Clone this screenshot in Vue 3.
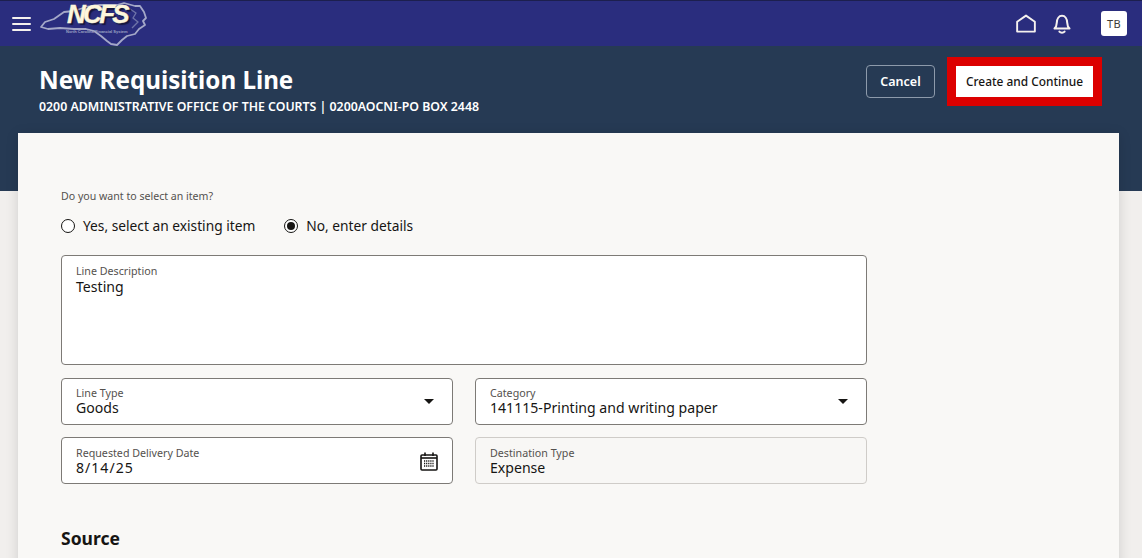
<script setup>
const radios = [
  { label: 'Yes, select an existing item', on: false },
  { label: 'No, enter details', on: true }
]
</script>

<template>
  <div class="page">
    <header class="nav">
      <div class="nav-left">
        <button class="burger" aria-label="Menu"><span></span><span></span><span></span></button>
        <div class="logo">
          <svg class="state" width="108" height="46" viewBox="0 0 108 46" fill="none">
            <path d="M1 26 L5 21 L14 18 L24 11 L34 10 L46 6 L60 4 L77 4 L84 2 L95 5 L100 5 L104 11 L106 17 L103 20 L105 24 L99 28 L95 33 L87 35 L82 39 L77 44 L71 43 L67 40 L61 35 L54 30 L46 28 L34 28 L20 27 L8 28 Z" stroke="#a4a8c8" stroke-width="1.8" stroke-linejoin="round"/>
            <path d="M90 8 L96 12 L93 17 L98 21 L92 27" stroke="#6f74a8" stroke-width="1.4" stroke-linejoin="round"/>
          </svg>
          <span class="logo-text">NCFS</span>
          <span class="logo-sub">North Carolina Financial System</span>
        </div>
      </div>
      <div class="nav-right">
        <svg class="home" width="20" height="19" viewBox="0 0 21 19" fill="none">
          <path d="M1.2 18 V7.6 L10.5 1.2 L19.8 7.6 V18 Z" stroke="#f5f1ee" stroke-width="2" stroke-linejoin="round"/>
        </svg>
        <svg class="bell" width="18" height="20" viewBox="0 0 18 20" fill="none">
          <path d="M1.5 14.6 H16.5 C14.6 12.8 14.3 11 14.2 8.6 C14 5 12.2 1.8 9 1.8 C5.8 1.8 4 5 3.8 8.6 C3.7 11 3.4 12.8 1.5 14.6 Z" stroke="#f5f1ee" stroke-width="2" stroke-linejoin="round"/>
          <path d="M6.4 17.6 C7.6 19 10.4 19 11.6 17.6" stroke="#f5f1ee" stroke-width="2" stroke-linecap="round"/>
        </svg>
        <div class="avatar">TB</div>
      </div>
    </header>

    <section class="hero">
      <div class="hero-text">
        <h1>New Requisition Line</h1>
        <p>0200 ADMINISTRATIVE OFFICE OF THE COURTS | 0200AOCNI-PO BOX 2448</p>
      </div>
      <div class="hero-actions">
        <button class="cancel">Cancel</button>
        <button class="create">Create and Continue</button>
      </div>
    </section>

    <main class="card">
      <div class="form">
        <div class="question">Do you want to select an item?</div>
        <div class="radios">
          <label v-for="r in radios" :key="r.label" class="radio">
            <span class="dot" :class="{ on: r.on }"></span>{{ r.label }}
          </label>
        </div>

        <div class="field area">
          <span class="lab">Line Description</span>
          <span class="val">Testing</span>
        </div>

        <div class="grid">
          <div class="field">
            <span class="lab">Line Type</span>
            <span class="val">Goods</span>
            <i class="caret"></i>
          </div>
          <div class="field">
            <span class="lab">Category</span>
            <span class="val">141115-Printing and writing paper</span>
            <i class="caret"></i>
          </div>
          <div class="field">
            <span class="lab">Requested Delivery Date</span>
            <span class="val date">8/14/25</span>
            <svg class="cal" width="18" height="19" viewBox="0 0 18 19" fill="none">
              <rect x="1" y="3" width="16" height="15" rx="1" stroke="#161513" stroke-width="1.6"/>
              <path d="M1 6 H17" stroke="#161513" stroke-width="1.6"/>
              <path d="M5 0.5 V4 M13 0.5 V4" stroke="#161513" stroke-width="1.6"/>
              <path d="M4 9 H14 M4 11.5 H14 M4 14 H14" stroke="#161513" stroke-width="1.5" stroke-dasharray="1.2 0.9"/>
            </svg>
          </div>
          <div class="field readonly">
            <span class="lab">Destination Type</span>
            <span class="val">Expense</span>
          </div>
        </div>

        <h2>Source</h2>
      </div>
    </main>
  </div>
</template>

<style>
html, body { margin: 0; height: 100%; overflow: hidden; background: #f1efed; }
</style>

<style scoped>
.page {
  width: 1142px;
  height: 558px;
  overflow: hidden;
  position: relative;
  background: #f1efed;
  font-family: "Noto Sans", "Open Sans", "Liberation Sans", sans-serif;
  color: #161513;
}
.nav {
  height: 45px;
  border-top: 1px solid #1c1f4e;
  background: #2a2d7e;
  display: flex;
  justify-content: space-between;
  align-items: center;
}
.nav-left { display: flex; align-items: center; padding-left: 12px; }
.burger {
  width: 19px;
  padding: 0;
  border: 0;
  background: none;
  display: flex;
  flex-direction: column;
  gap: 4px;
}
.burger span { height: 2px; background: #f5f1ee; border-radius: 1px; }
.logo { position: relative; width: 108px; height: 46px; margin-left: 9px; }
.state { position: absolute; left: 0; top: 0; }
.logo-text {
  position: absolute;
  left: 27px;
  top: 3px;
  font: italic 700 26px/21px "Liberation Sans", sans-serif;
  letter-spacing: -2.7px;
  color: #fdf6dc;
  -webkit-text-stroke: 0.4px #fdf6dc;
  text-shadow: 2px 2px 1px #17173f;
}
.logo-sub {
  position: absolute;
  left: 26px;
  top: 28px;
  font: 700 4px/5px "Liberation Sans", sans-serif;
  color: #9ea2c4;
  white-space: nowrap;
}
.nav-right { display: flex; align-items: center; padding-right: 15px; }
.home { margin-right: 17px; }
.bell { margin-right: 30px; }
.avatar {
  width: 26px;
  height: 25px;
  border-radius: 3px;
  background: #fff;
  color: #3c3a38;
  font-size: 11px;
  letter-spacing: 0.3px;
  display: flex;
  align-items: center;
  justify-content: center;
}
.hero {
  height: 145px;
  background: #263a54;
  display: flex;
  justify-content: space-between;
  align-items: flex-start;
  padding: 10px 40px 0 39px;
  box-sizing: border-box;
}
.hero-text { color: #fff; padding-top: 8px; }
h1 { margin: 0; font-size: 24.2px; line-height: 31px; font-weight: 700; }
.hero-text p { margin: 3px 0 0; font-size: 12.33px; line-height: 17px; font-weight: 600; }
.hero-actions { display: flex; align-items: center; gap: 12px; padding-top: 1px; }
.cancel {
  width: 69px;
  height: 33px;
  padding: 0;
  background: transparent;
  border: 1px solid #8d9aab;
  border-radius: 4px;
  color: #fff;
  font: 600 12.5px "Noto Sans", sans-serif;
}
.create {
  width: 155px;
  height: 49px;
  padding: 0 0 2px;
  background: #fff;
  border: 9px solid #dc0000;
  color: #161513;
  font: 500 11.9px "Noto Sans", sans-serif;
}
.card {
  margin: -58px 23px 0 18px;
  height: 500px;
  background: #f9f8f6;
  box-shadow: 0 2px 12px rgba(0, 0, 0, 0.14);
  padding: 55px 0 0 43px;
  box-sizing: border-box;
}
.form { width: 806px; }
.question { font-size: 10.6px; line-height: 16px; color: #54514e; }
.radios { display: flex; gap: 29px; margin-top: 12px; height: 20px; }
.radio { display: flex; align-items: center; gap: 8px; font-size: 13.75px; line-height: 20px; color: #161513; }
.dot {
  width: 14px;
  height: 14px;
  box-sizing: border-box;
  border: 1.3px solid #161513;
  border-radius: 50%;
  background: #fff;
  display: flex;
  align-items: center;
  justify-content: center;
}
.dot.on::after { content: ""; width: 8px; height: 8px; border-radius: 50%; background: #161513; }
.field {
  position: relative;
  height: 47px;
  box-sizing: border-box;
  border: 1px solid #7d7a76;
  border-radius: 4px;
  background: #fff;
  padding: 8px 14px 0;
  display: flex;
  flex-direction: column;
}
.field.area { height: 110px; margin-top: 19px; }
.field.readonly { background: #f8f7f5; border-color: #cfccc8; }
.lab { font-size: 10.7px; line-height: 14px; color: #54514e; }
.val { font-size: 14.1px; line-height: 17px; color: #161513; }
.val.date { letter-spacing: 1px; }
.grid .val { margin-top: -1px; }
.grid .field:nth-child(-n+2) { padding-top: 7px; }
.grid {
  display: grid;
  grid-template-columns: 392px 392px;
  column-gap: 22px;
  row-gap: 12px;
  margin-top: 13px;
}
.caret {
  position: absolute;
  right: 18px;
  top: 20px;
  width: 0;
  height: 0;
  border-left: 5px solid transparent;
  border-right: 5px solid transparent;
  border-top: 5px solid #161513;
}
.cal { position: absolute; right: 14px; top: 14px; }
h2 { margin: 41px 0 0; font-size: 17.5px; line-height: 26px; font-weight: 700; color: #161513; }
</style>
